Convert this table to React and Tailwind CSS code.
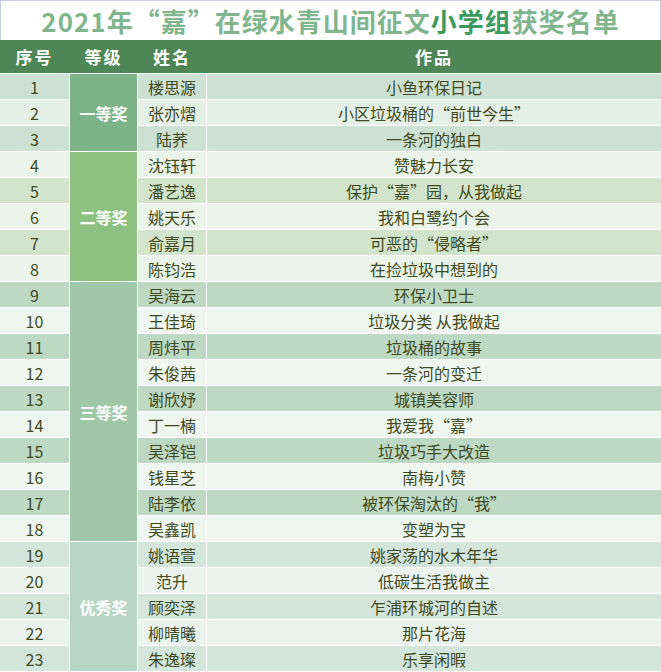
import React from 'react';

const groups = [
  {
    label: '一等奖',
    award: 'bg-[#7db389]',
    dark: 'bg-[#cde1d3]',
    light: 'bg-[#e4efe6]',
    rows: [
      ['楼思源', '小鱼环保日记'],
      ['张亦熠', '小区垃圾桶的“前世今生”'],
      ['陆荞', '一条河的独白'],
    ],
  },
  {
    label: '二等奖',
    award: 'bg-[#8dc182]',
    dark: 'bg-[#d2e5cc]',
    light: 'bg-[#eaf4e8]',
    rows: [
      ['沈钰轩', '赞魅力长安'],
      ['潘艺逸', '保护“嘉”园，从我做起'],
      ['姚天乐', '我和白鹭约个会'],
      ['俞嘉月', '可恶的“侵略者”'],
      ['陈钧浩', '在捡垃圾中想到的'],
    ],
  },
  {
    label: '三等奖',
    award: 'bg-[#9fc8a9]',
    dark: 'bg-[#bdd9c4]',
    light: 'bg-[#eef6ef]',
    rows: [
      ['吴海云', '环保小卫士'],
      ['王佳琦', '垃圾分类 从我做起'],
      ['周炜平', '垃圾桶的故事'],
      ['朱俊茜', '一条河的变迁'],
      ['谢欣妤', '城镇美容师'],
      ['丁一楠', '我爱我“嘉”'],
      ['吴泽铠', '垃圾巧手大改造'],
      ['钱星芝', '南梅小赞'],
      ['陆李依', '被环保淘汰的“我”'],
      ['吴鑫凯', '变塑为宝'],
    ],
  },
  {
    label: '优秀奖',
    award: 'bg-[#b7d5c4]',
    dark: 'bg-[#d4e6dc]',
    light: 'bg-[#eaf3ee]',
    rows: [
      ['姚语萱', '姚家荡的水木年华'],
      ['范升', '低碳生活我做主'],
      ['顾奕泽', '乍浦环城河的自述'],
      ['柳晴曦', '那片花海'],
      ['朱逸璨', '乐享闲暇'],
    ],
  },
];

const spans = ['row-span-3', 'row-span-5', 'row-span-10', 'row-span-5'];

export default function App() {
  let n = 0;
  const cells = [];

  groups.forEach((g, gi) => {
    g.rows.forEach(([name, work], ri) => {
      n += 1;
      const bg = n % 2 === 1 ? g.dark : g.light;
      cells.push(
        <div key={`n${n}`} className={`${bg} flex items-center justify-center`}>
          {n}
        </div>
      );
      if (ri === 0) {
        cells.push(
          <div
            key={`a${gi}`}
            className={`${g.award} ${spans[gi]} flex items-center justify-center text-white font-bold`}
          >
            {g.label}
          </div>
        );
      }
      cells.push(
        <div key={`p${n}`} className={`${bg} flex items-center justify-center`}>
          {name}
        </div>
      );
      cells.push(
        <div key={`w${n}`} className={`${bg} flex items-center justify-center`}>
          {work}
        </div>
      );
    });
  });

  return (
    <div
      className="w-[661px] h-[672px] bg-white overflow-hidden"
      style={{ fontFamily: '"Noto Sans CJK SC", "Noto Sans", sans-serif' }}
    >
      <div className="h-[40px] border-t border-x border-[#c8cce0] flex items-center justify-center text-[26px] font-bold tracking-[1px] text-[#80b58e] leading-none">
        2021年“嘉”在绿水青山间征文<span className="text-[#3d9a5e]">小学组</span>获奖名单
      </div>

      <div className="grid grid-cols-[69px_67px_68px_1fr] gap-x-px h-[33px] bg-[#4e8656] text-white font-bold text-[17px] tracking-[2px]">
        <div className="flex items-center justify-center">序号</div>
        <div className="flex items-center justify-center">等级</div>
        <div className="flex items-center justify-center">姓名</div>
        <div className="flex items-center justify-center">作品</div>
      </div>

      <div className="grid grid-cols-[69px_67px_68px_1fr] grid-rows-[repeat(23,25px)] gap-px pt-px bg-white text-[16px] leading-none text-[#3f4a22]">
        {cells}
      </div>
    </div>
  );
}
